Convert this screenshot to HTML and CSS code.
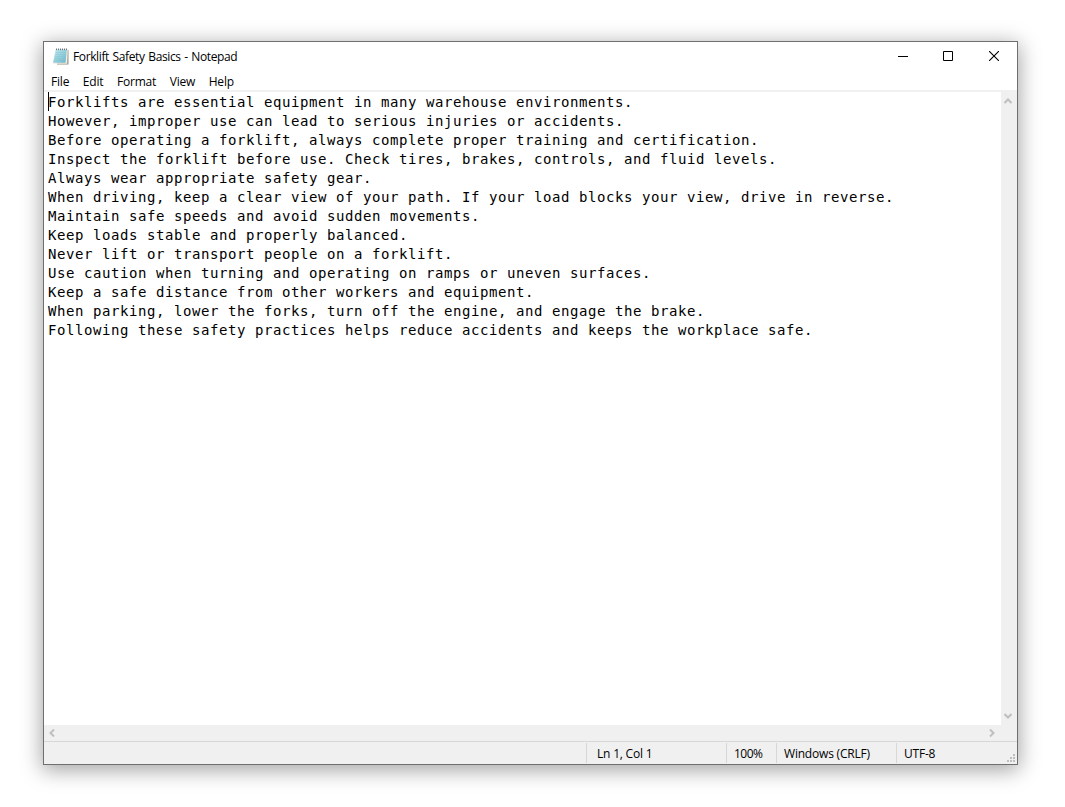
FILE: index.html
```html
<!DOCTYPE html>
<html lang="en">

<head>
  <meta charset="utf-8">
  <title>Forklift Safety Basics - Notepad</title>
  <link rel="stylesheet" href="styles.css">
</head>

<body>
  <div class="window">
    <div class="title-bar">
      <svg class="app-icon" width="16" height="17" viewBox="0 0 16 17">
        <defs>
          <linearGradient id="page" x1="0" y1="0" x2="1" y2="1">
            <stop offset="0" stop-color="#c9edf3" />
            <stop offset="1" stop-color="#66b3c6" />
          </linearGradient>
        </defs>
        <path d="M4 2h11.5v14.5H4z" fill="#9b9283" />
        <path d="M3 1.5h11.8l-.6 14.3H0z" fill="#eeeee8" />
        <path d="M2.7 1.5h11.1l-1.3 13.3H0z" fill="url(#page)" />
        <path d="M3 4.5h10M2.6 6.5h10.2M2.2 8.5h10.4M1.8 10.5h10.6M1.4 12.5h10.8" stroke="#85c3d2" stroke-width=".5" />
        <path d="M3.5 .5v1.7M5.5 .5v1.7M7.5 .5v1.7M9.5 .5v1.7M11.5 .5v1.7M13.5 .5v1.7" stroke="#68777c" />
      </svg>
      <span class="title">Forklift Safety Basics - Notepad</span>
      <div class="controls">
        <svg class="minimize" width="10" height="10" viewBox="0 0 10 10"><path d="M0 5.5h10" stroke="#000" /></svg>
        <svg class="maximize" width="10" height="10" viewBox="0 0 10 10"><path d="M.5.5h9v9h-9z" fill="none" stroke="#000" /></svg>
        <svg width="10" height="10" viewBox="0 0 10 10"><path d="M0 0l10 10M10 0L0 10" stroke="#000" stroke-width="1.1" /></svg>
      </div>
    </div>
    <div class="menu-bar">
      <span>File</span>
      <span>Edit</span>
      <span>Format</span>
      <span>View</span>
      <span>Help</span>
    </div>
    <div class="editor">
      <div class="text-area">
        <div class="caret"></div>
<pre class="text">Forklifts are essential equipment in many warehouse environments.
However, improper use can lead to serious injuries or accidents.
Before operating a forklift, always complete proper training and certification.
Inspect the forklift before use. Check tires, brakes, controls, and fluid levels.
Always wear appropriate safety gear.
When driving, keep a clear view of your path. If your load blocks your view, drive in reverse.
Maintain safe speeds and avoid sudden movements.
Keep loads stable and properly balanced.
Never lift or transport people on a forklift.
Use caution when turning and operating on ramps or uneven surfaces.
Keep a safe distance from other workers and equipment.
When parking, lower the forks, turn off the engine, and engage the brake.
Following these safety practices helps reduce accidents and keeps the workplace safe.</pre>
      </div>
      <div class="scroll-v">
        <svg width="8" height="6" viewBox="0 0 8 6"><path d="M.5 5L4 1.5 7.5 5" class="arrow" /></svg>
        <svg width="8" height="6" viewBox="0 0 8 6"><path d="M.5 1L4 4.5 7.5 1" class="arrow" /></svg>
      </div>
    </div>
    <div class="scroll-h">
      <svg width="6" height="8" viewBox="0 0 6 8"><path d="M5 .5L1.5 4 5 7.5" class="arrow" /></svg>
      <svg width="6" height="8" viewBox="0 0 6 8"><path d="M1 .5L4.5 4 1 7.5" class="arrow" /></svg>
    </div>
    <div class="status-bar">
      <div class="status position">Ln 1, Col 1</div>
      <div class="status zoom">100%</div>
      <div class="status line-ending">Windows (CRLF)</div>
      <div class="status encoding">UTF-8</div>
      <svg class="grip" width="8" height="8" viewBox="0 0 8 8">
        <path d="M6 0h2v2H6zM3 3h2v2H3zM6 3h2v2H6zM0 6h2v2H0zM3 6h2v2H3zM6 6h2v2H6z" fill="#bfbfbf" />
      </svg>
    </div>
  </div>
</body>

</html>
```
FILE: styles.css
```css
body {
  margin: 0;
  height: 807px;
  overflow: hidden;
  background: #fff;
  color: #000;
  font-family: 'Open Sans', sans-serif;
  font-size: 12px;
}

.window {
  box-sizing: border-box;
  display: flex;
  flex-direction: column;
  width: 975px;
  height: 724px;
  margin: 41px 0 0 43px;
  border: 1px solid #6f6f6f;
  background: #fff;
  box-shadow: 0 4px 20px 1px rgba(0, 0, 0, 0.37);
}

.title-bar {
  display: flex;
  align-items: center;
  height: 29px;
  padding-left: 9px;
}

.app-icon {
  margin-right: 4px;
}

.title {
  letter-spacing: -0.38px;
  word-spacing: 0.9px;
}

.controls {
  display: flex;
  margin-left: auto;
  padding: 0 18px 2px 0;
}

.minimize {
  margin-right: 35px;
}

.maximize {
  margin-right: 36px;
}

.menu-bar {
  display: flex;
  gap: 13.6px;
  height: 19px;
  padding-left: 7px;
  border-bottom: 2px solid #f0f0f0;
  line-height: 21px;
  letter-spacing: -0.2px;
}

.editor {
  display: flex;
  flex: 1;
}

.text-area {
  position: relative;
  flex: 1;
}

.text {
  margin: 1px 0 0 4px;
  font-family: 'DejaVu Sans Mono', monospace;
  font-size: 14px;
  line-height: 19px;
  letter-spacing: 0.571px;
}

.caret {
  position: absolute;
  left: 4px;
  top: 0;
  width: 1px;
  height: 19px;
  background: #000;
}

.scroll-v {
  display: flex;
  flex-direction: column;
  align-items: center;
  justify-content: space-between;
  box-sizing: border-box;
  width: 16px;
  padding: 6px 2px 6px 0;
  background: #f0f0f0;
}

.scroll-h {
  display: flex;
  align-items: center;
  justify-content: space-between;
  box-sizing: border-box;
  height: 16px;
  padding: 0 22px 1px 5px;
  background: #f0f0f0;
}

.arrow {
  fill: none;
  stroke: #bfbfbf;
  stroke-width: 2;
}

.status-bar {
  position: relative;
  display: flex;
  justify-content: flex-end;
  box-sizing: border-box;
  height: 23px;
  padding: 1px 0;
  border-top: 1px solid #d7d7d7;
  background: #f0f0f0;
}

.status {
  box-sizing: border-box;
  height: 20px;
  padding-left: 7px;
  border-left: 1px solid #d7d7d7;
  line-height: 21px;
  letter-spacing: -0.2px;
}

.position {
  width: 140px;
  padding-left: 10px;
}

.zoom {
  width: 50px;
  letter-spacing: -0.5px;
}

.line-ending {
  width: 120px;
}

.encoding {
  width: 121px;
}

.grip {
  position: absolute;
  right: 2px;
  bottom: 2px;
}
```
